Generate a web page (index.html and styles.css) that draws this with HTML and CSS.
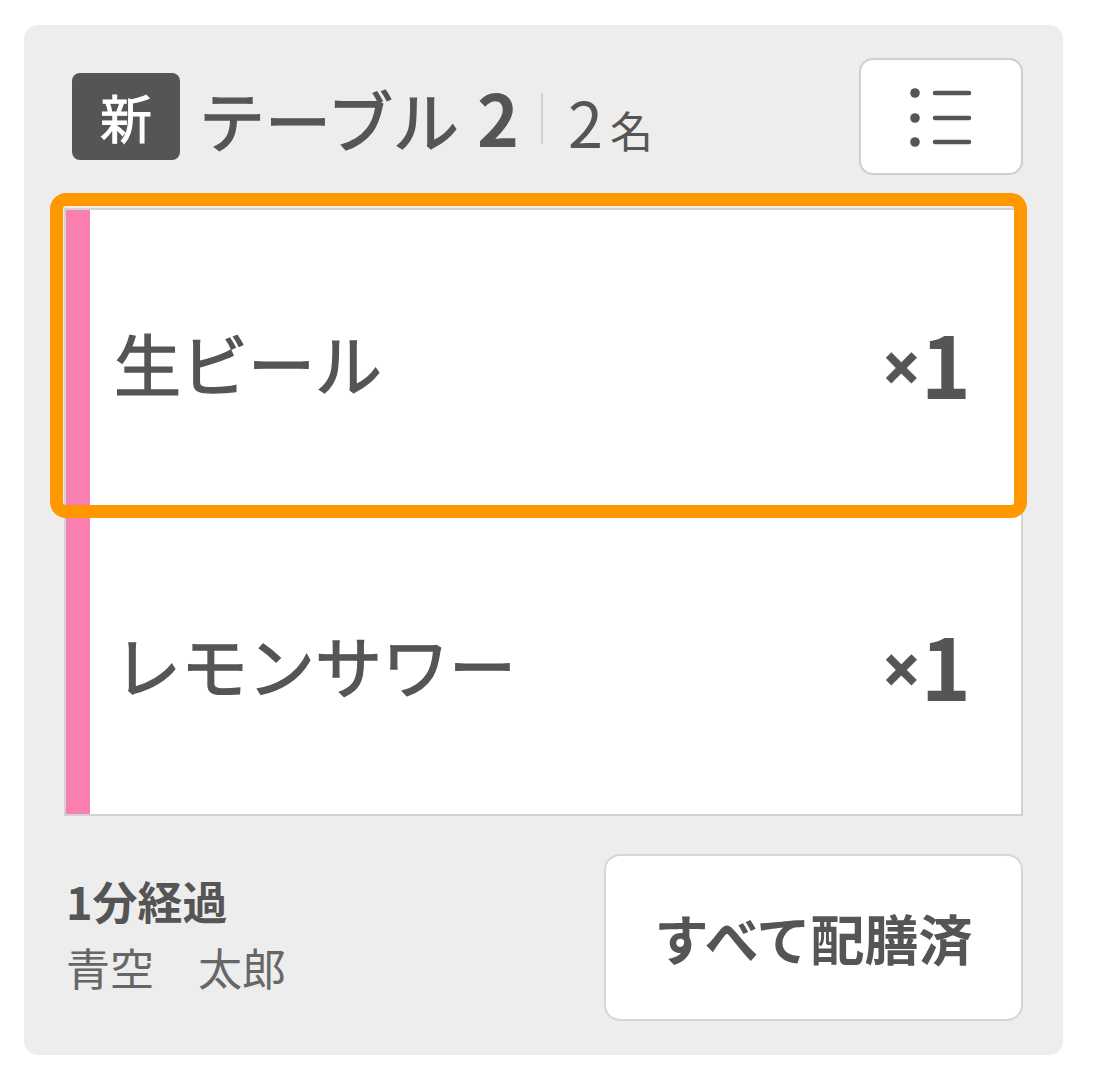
FILE: index.html
```html
<!DOCTYPE html>
<html lang="ja">
<head>
  <meta charset="UTF-8">
  <meta name="viewport" content="width=device-width, initial-scale=1.0">
  <title>テーブル2</title>
  <link rel="stylesheet" href="styles.css">
</head>
<body>
  <div class="ticket">
    <div class="ticket-head">
      <div class="title">
        <span class="badge">新</span>
        <span class="table-name">テーブル<span class="num">2</span></span>
        <span class="sep"></span>
        <span class="guests"><span class="num">2</span>名</span>
      </div>
      <button class="menu-btn">
        <svg width="62" height="60" viewBox="0 0 62 60">
          <circle cx="5" cy="6" r="4.8" fill="#555"/>
          <circle cx="5" cy="31" r="4.8" fill="#555"/>
          <circle cx="5" cy="55" r="4.8" fill="#555"/>
          <g stroke="#555" stroke-width="4.5" stroke-linecap="round">
            <line x1="25" y1="6" x2="59" y2="6"/>
            <line x1="25" y1="31" x2="59" y2="31"/>
            <line x1="25" y1="55" x2="59" y2="55"/>
          </g>
        </svg>
      </button>
    </div>

    <div class="orders">
      <div class="order">
        <span class="order-name">生ビール</span>
        <span class="qty"><span class="x">×</span>1</span>
      </div>
      <div class="order">
        <span class="order-name">レモンサワー</span>
        <span class="qty"><span class="x">×</span>1</span>
      </div>
      <div class="focus-ring"></div>
    </div>

    <div class="ticket-foot">
      <div class="meta">
        <div class="elapsed">1分経過</div>
        <div class="staff">青空　太郎</div>
      </div>
      <button class="serve-btn">すべて配膳済</button>
    </div>
  </div>
</body>
</html>
```

FILE: styles.css
```css
* {
  padding: 0;
  margin: 0;
  box-sizing: border-box;
}
body {
  background: #fff;
  font-family: "Noto Sans CJK JP", "Noto Sans", sans-serif;
  color: #555;
  padding: 25px 30px 0 24px;
}

.ticket {
  width: 1039px;
  height: 1030px;
  background: #ededed;
  border-radius: 14px;
  padding: 33px 40px 35px;
  display: flex;
  flex-direction: column;
}

.ticket-head {
  display: flex;
  align-items: center;
  justify-content: space-between;
  height: 117px;
}
.title {
  display: flex;
  align-items: center;
  padding-left: 8px;
}
.badge {
  width: 108px;
  height: 87px;
  border-radius: 8px;
  background: #555;
  color: #fff;
  font-size: 52px;
  line-height: 1;
  -webkit-text-stroke: 1px #fff;
  display: flex;
  align-items: center;
  justify-content: center;
}
.table-name {
  margin-left: 19px;
  font-size: 66px;
  line-height: 1;
  -webkit-text-stroke: 1.4px #555;
  display: flex;
  align-items: baseline;
}
.table-name .num {
  font-size: 71px;
  font-weight: 700;
  -webkit-text-stroke: 0;
  margin-left: 18px;
}
.sep {
  width: 2px;
  height: 51px;
  background: #d0d0d0;
  margin: 4px 25px 0 22px;
}
.guests {
  font-size: 43px;
  line-height: 1;
  margin-top: 8px;
  display: flex;
  align-items: baseline;
}
.guests .num {
  font-size: 63px;
  margin-right: 7px;
}
.menu-btn {
  width: 164px;
  height: 117px;
  background: #fff;
  border: 2px solid #cfcfcf;
  border-radius: 14px;
  display: flex;
  align-items: center;
  justify-content: center;
}

.orders {
  position: relative;
  margin-top: 33px;
  border: 2px solid #d2d2d2;
  background: #fff;
}
.order {
  height: 302px;
  border-left: 24px solid #fa7fb1;
  padding: 0 50px 0 24px;
  display: flex;
  align-items: center;
  justify-content: space-between;
}
.order-name {
  font-size: 67px;
  line-height: 1;
  -webkit-text-stroke: 1.4px #555;
}
.qty {
  font-size: 85px;
  font-weight: 700;
  line-height: 1;
  display: flex;
  align-items: center;
}
.qty .x {
  font-family: "Noto Sans", "Liberation Sans", sans-serif;
  font-size: 68px;
  -webkit-text-stroke: 0.6px #555;
  margin-top: 10px;
}
/* highlight around the selected order line */
.focus-ring {
  position: absolute;
  top: -17px;
  left: -16px;
  width: 977px;
  height: 325px;
  border: 13px solid #ff9800;
  border-radius: 16px;
}

.ticket-foot {
  margin-top: 38px;
  display: flex;
  align-items: center;
  justify-content: space-between;
}
.meta {
  padding-left: 2px;
  margin-top: -8px;
}
.elapsed {
  font-size: 45px;
  font-weight: 700;
  line-height: 1.5;
}
.staff {
  font-size: 44px;
  line-height: 1.5;
  color: #666;
}
.serve-btn {
  width: 419px;
  height: 167px;
  background: #fff;
  border: 2px solid #d6d6d6;
  border-radius: 16px;
  font-family: inherit;
  color: #555;
  font-size: 54px;
  font-weight: 700;
}
```
